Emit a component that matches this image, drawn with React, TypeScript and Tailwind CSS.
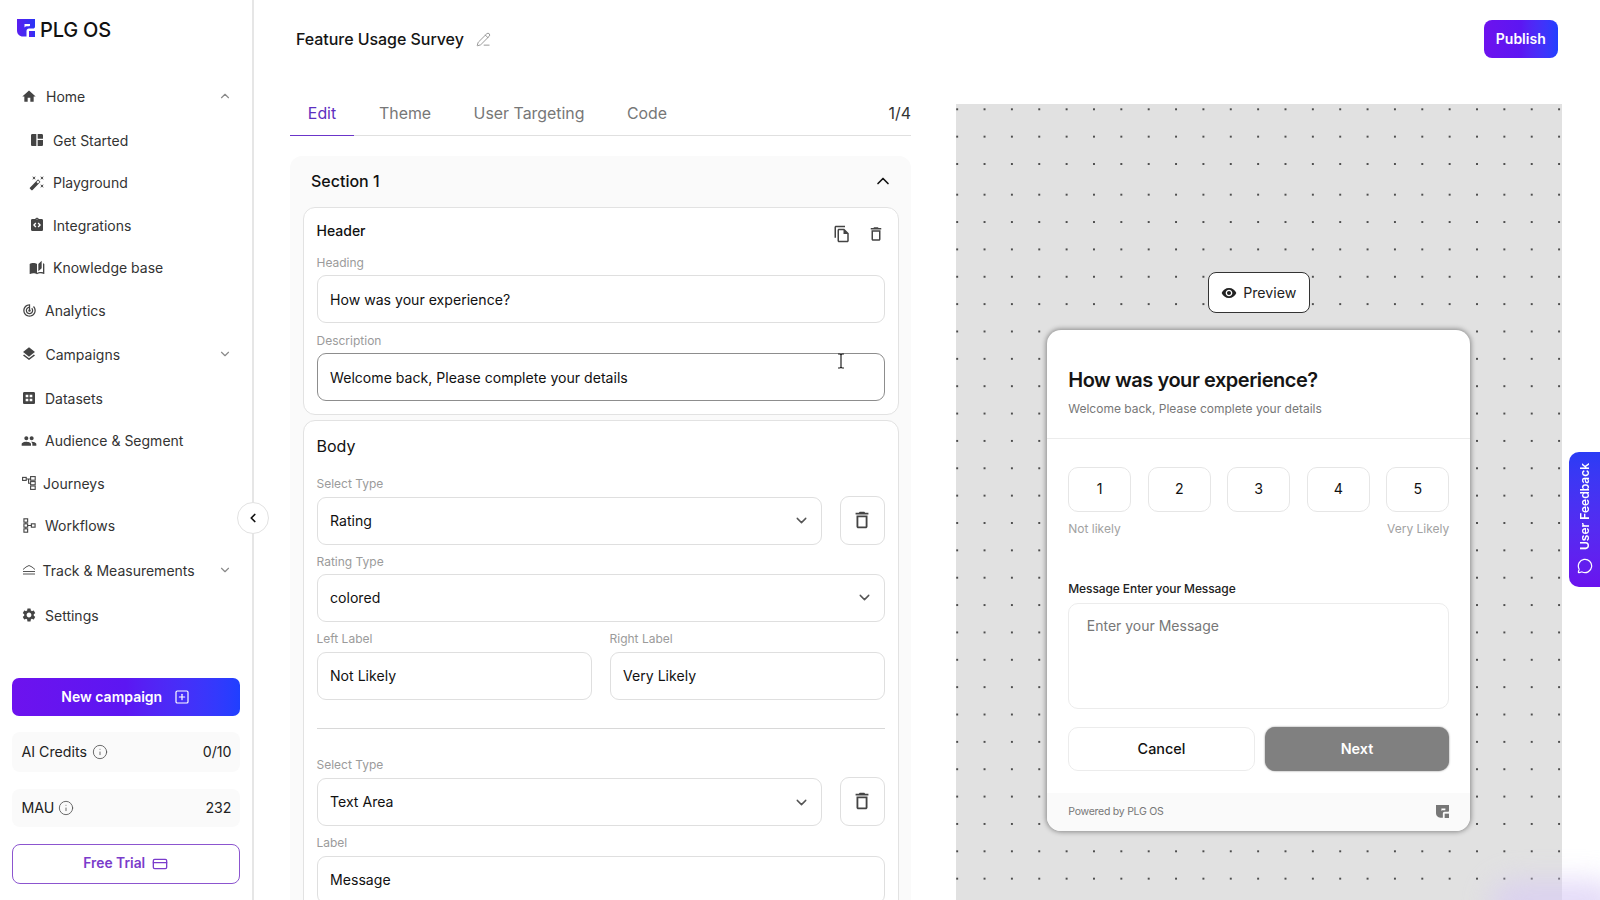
import React from "react";
import { ChevronDown, ChevronLeft, ChevronUp, CreditCard, Info, MessageCircle, PencilLine, SquarePlus } from "lucide-react";
import {
  MdAutoFixHigh, MdDataset, MdHome, MdIntegrationInstructions, MdLayers, MdOutlineDelete, MdOutlineFileCopy,
  MdPeople, MdSettings, MdSpaceDashboard, MdTrackChanges, MdVisibility, MdAutoStories,
} from "react-icons/md";

const Logo = ({ c = "url(#lg)", cls = "w-[18px] h-[18px]" }: { c?: string; cls?: string }) => (
  <svg viewBox="0 0 18 18" className={cls}>
    <defs>
      <linearGradient id="lg" x1="0" x2="1" y1="0" y2="0">
        <stop offset="0" stopColor="#5a1ff0" />
        <stop offset="1" stopColor="#2a35f5" />
      </linearGradient>
    </defs>
    <path d="M0 0H18V7.5C18 9 17 9.5 16 9.5H12C10.5 9.5 9.5 10.5 9.5 12V17.5L6 17.5C2.5 17.5 0 15 0 11.5Z" fill={c} />
    <path d="M7.5 5H13V6.5C13 7 12.6 7.3 12 7.3H9.5C8.5 7.3 7.5 8 7.5 9Z" fill="#fff" />
    <rect x="12" y="12" width="6" height="6" fill={c} />
  </svg>
);

const JourneyIcon = () => (
  <svg viewBox="0 0 14 14" className="w-[14px] h-[14px]" fill="none" stroke="#444" strokeWidth="1.1">
    <rect x="0.6" y="1.4" width="3.6" height="3" />
    <rect x="8.6" y="0.6" width="4.6" height="3.6" />
    <rect x="8.6" y="5.6" width="4.6" height="3.2" />
    <rect x="8.6" y="10" width="4.6" height="3.4" />
    <path d="M4.2 3H8.6M6.6 3V7.2H8.6" />
  </svg>
);
const WorkflowIcon = () => (
  <svg viewBox="0 0 14 16" className="w-[13px] h-[15px]" fill="none" stroke="#444" strokeWidth="1.2">
    <rect x="1" y="0.8" width="4" height="3.6" />
    <rect x="1" y="6.2" width="4" height="3.6" />
    <rect x="1" y="11.6" width="4" height="3.6" />
    <rect x="9" y="6.2" width="4" height="3.6" />
    <path d="M3 4.4V6.2M3 9.8V11.6M5 8H9" />
  </svg>
);
const TrackIcon = () => (
  <svg viewBox="0 0 14 12" className="w-[14px] h-[12px]" fill="none" stroke="#555" strokeWidth="1">
    <path d="M1 5.5L4 3L7 1.5L10 3L13 5.5M1 7.5H13M1 10H13" />
  </svg>
);

type Row = { label: string; icon: React.ReactNode; h: string; sub?: boolean; gap: string; chev?: "up" | "down" };
const ic = "text-[#444] text-[16px]";
const rows: Row[] = [
  { label: "Home", icon: <MdHome className="text-[#444] text-[17px]" />, h: "h-[44.6px]", gap: "gap-[9px]", chev: "up" },
  { label: "Get Started", icon: <MdSpaceDashboard className={ic} />, h: "h-[43.35px]", sub: true, gap: "gap-[8px]" },
  { label: "Playground", icon: <MdAutoFixHigh className={ic} />, h: "h-[42px]", sub: true, gap: "gap-[8px]" },
  { label: "Integrations", icon: <MdIntegrationInstructions className={ic} />, h: "h-[42.5px]", sub: true, gap: "gap-[8px]" },
  { label: "Knowledge base", icon: <MdAutoStories className={ic} />, h: "h-[42.25px]", sub: true, gap: "gap-[8px]" },
  { label: "Analytics", icon: <MdTrackChanges className="text-[#444] text-[15px]" />, h: "h-[43.35px]", gap: "gap-[8px]" },
  { label: "Campaigns", icon: <MdLayers className={ic} />, h: "h-[44.5px]", gap: "gap-[8.5px]", chev: "down" },
  { label: "Datasets", icon: <MdDataset className={ic} />, h: "h-[43.15px]", gap: "gap-[8px]" },
  { label: "Audience & Segment", icon: <MdPeople className={ic} />, h: "h-[42.5px]", gap: "gap-[8px]" },
  { label: "Journeys", icon: <JourneyIcon />, h: "h-[42px]", gap: "gap-[6px]" },
  { label: "Workflows", icon: <WorkflowIcon />, h: "h-[43.5px]", gap: "gap-[8px]" },
  { label: "Track & Measurements", icon: <TrackIcon />, h: "h-[45.5px]", gap: "gap-[5.5px]", chev: "down" },
  { label: "Settings", icon: <MdSettings className={ic} />, h: "h-[44px]", gap: "gap-[8px]" },
];

const Sidebar = () => (
  <aside className="relative w-[254px] h-full shrink-0 border-r-2 border-[#e6e6e6] flex flex-col bg-white">
    <div className="h-[74px] flex items-start pl-[17px] pt-[19px] gap-[5px]">
      <Logo />
      <span className="text-[20px] leading-[22px] font-medium text-[#111] tracking-[-0.2px]">PLG OS</span>
    </div>
    <nav className="flex flex-col pl-[21px] pr-[20.5px]">
      {rows.map((r) => (
        <div key={r.label} className={`flex items-center ${r.h} ${r.sub ? "pl-[8px]" : ""} ${r.gap}`}>
          <span className="w-[16px] flex justify-center shrink-0">{r.icon}</span>
          <span className="text-[14px] text-[#333] whitespace-nowrap">{r.label}</span>
          {r.chev === "up" && <ChevronUp size={14} className="ml-auto text-[#8a8a8a]" />}
          {r.chev === "down" && <ChevronDown size={14} className="ml-auto text-[#8a8a8a]" />}
        </div>
      ))}
    </nav>
    <div className="mt-auto pl-[12px] pr-[12.5px] pb-[16.5px] flex flex-col">
      <button className="h-[38px] rounded-[7px] bg-gradient-to-r from-[#6d12ee] via-[#5c16f2] to-[#1f3fff] text-white font-semibold text-[14px] flex items-center justify-center gap-[12px]">
        New campaign <SquarePlus size={16} strokeWidth={1.8} />
      </button>
      <div className="mt-[16px] h-[40px] rounded-[8px] bg-[#fafafa] flex items-center pl-[9.5px] pr-[8px] text-[14.2px] text-[#222]">
        AI Credits <Info size={16} strokeWidth={1.3} className="ml-[5px] text-[#555]" />
        <span className="ml-auto">0/10</span>
      </div>
      <div className="mt-[17px] h-[38.5px] rounded-[8px] bg-[#fafafa] flex items-center pl-[9.5px] pr-[8px] text-[14.2px] text-[#222]">
        MAU <Info size={16} strokeWidth={1.3} className="ml-[4px] text-[#555]" />
        <span className="ml-auto">232</span>
      </div>
      <button className="mt-[17px] h-[39.5px] rounded-[8px] border border-[#8c55cf] text-[#7a3ccb] font-semibold text-[13.8px] flex items-center justify-center gap-[7px]">
        Free Trial <CreditCard size={16} strokeWidth={2} />
      </button>
    </div>
    <button className="absolute right-[-17px] top-[502px] w-[32px] h-[32px] rounded-full bg-white border border-[#e2e2e2] flex items-center justify-center text-[#111]">
      <ChevronLeft size={14} strokeWidth={3} />
    </button>
  </aside>
);

const Label = ({ children, cls = "" }: { children: React.ReactNode; cls?: string }) => (
  <div className={`text-[12px] leading-[16px] text-[#9b9b9b] ${cls}`}>{children}</div>
);
const Field = ({ value, cls = "", dark }: { value: string; cls?: string; dark?: boolean }) => (
  <div className={`h-[48px] rounded-[9px] border ${dark ? "border-[#8d8d8d]" : "border-[#dfdfdf]"} bg-white flex items-center pl-[12.5px] text-[14.1px] text-[#111] ${cls}`}>
    {value}
  </div>
);
const Select = ({ value, cls = "" }: { value: string; cls?: string }) => (
  <div className={`h-[47.4px] rounded-[9px] border border-[#dfdfdf] bg-white flex items-center pl-[12.5px] pr-[11px] text-[14.1px] text-[#111] ${cls}`}>
    {value}
    <ChevronDown size={17} strokeWidth={2} className="ml-auto text-[#555]" />
  </div>
);
const TrashBtn = () => (
  <div className="w-[45px] h-[48.7px] rounded-[9px] border border-[#dfdfdf] flex items-center justify-center">
    <MdOutlineDelete className="text-[22px] text-[#444]" />
  </div>
);

const Editor = () => (
  <div className="w-[621px] shrink-0 ml-[36px] flex flex-col">
    <div className="h-[32px] flex border-b-[1.5px] border-[#e0e0e0] text-[15.9px] text-[#777] items-start relative">
      <div className="w-[64px] h-[32px] border-b-[1.5px] border-[#6b35c9] text-[#5d2fc0] flex justify-center leading-[18px] pt-[1px]">Edit</div>
      <span className="ml-[25px] leading-[18px] pt-[1px]">Theme</span>
      <span className="ml-[42.5px] leading-[18px] pt-[1px]">User Targeting</span>
      <span className="ml-[42.5px] leading-[18px] pt-[1px]">Code</span>
      <span className="ml-auto text-[#333] leading-[18px] pt-[1px]">1/4</span>
    </div>
    <div className="mt-[20px] flex-1 rounded-t-[12px] bg-[#fafafa] px-[12.5px] overflow-hidden">
      <div className="h-[50.5px] flex items-center justify-between pl-[8.5px] pr-[6px] text-[16px] font-medium text-[#111]">
        Section 1 <ChevronUp size={20} strokeWidth={2} />
      </div>
      <div className="h-[208.5px] rounded-[12px] border border-[#e2e2e2] bg-white px-[13px] flex flex-col relative">
        <div className="h-[48px] flex items-start pt-[14px] justify-between">
          <span className="text-[14px] leading-[18px] font-medium text-[#111]">Header</span>
          <span className="flex gap-[15.5px] pt-[3.5px] text-[#444]">
            <MdOutlineFileCopy className="text-[18px]" />
            <MdOutlineDelete className="text-[18px]" />
          </span>
        </div>
        <Label cls="-mt-[1px]">Heading</Label>
        <Field value="How was your experience?" cls="mt-[4.8px]" />
        <Label cls="mt-[9.3px]">Description</Label>
        <Field value="Welcome back, Please complete your details" dark cls="mt-[4.5px]" />
      </div>
      <div className="mt-[5px] rounded-[12px] border border-[#e2e2e2] bg-white px-[13px] flex flex-col pb-[8px]">
        <div className="h-[51px] pt-[14px] text-[16px] leading-[22px] text-[#111]">Body</div>
        <Label cls="mt-[4.3px]">Select Type</Label>
        <div className="mt-[3.7px] flex items-end gap-[17.5px]">
          <Select value="Rating" cls="flex-1" />
          <TrashBtn />
        </div>
        <Label cls="mt-[9px]">Rating Type</Label>
        <Select value="colored" cls="mt-[4.6px]" />
        <div className="mt-[9.3px] grid grid-cols-2 gap-[18px]">
          <div>
            <Label>Left Label</Label>
            <Field value="Not Likely" cls="mt-[5px]" />
          </div>
          <div>
            <Label>Right Label</Label>
            <Field value="Very Likely" cls="mt-[5px]" />
          </div>
        </div>
        <div className="mt-[28.1px] h-[1px] bg-[#d8d8d8]" />
        <Label cls="mt-[28.4px]">Select Type</Label>
        <div className="mt-[3.6px] flex items-end gap-[17.5px]">
          <Select value="Text Area" cls="flex-1" />
          <TrashBtn />
        </div>
        <Label cls="mt-[9.4px]">Label</Label>
        <Field value="Message" cls="mt-[4.6px]" />
      </div>
    </div>
  </div>
);

const dots = "bg-[#e1e1e1] bg-[radial-gradient(circle,#4d4d4d_1.1px,transparent_1.5px)] bg-[length:27.37px_27.37px]";

const Preview = () => (
  <div className="ml-[45px] w-[606px] shrink-0 flex flex-col overflow-hidden">
    <div className={`h-[76px] shrink-0 ${dots} bg-[position:-12.5px_-8.4px]`} />
    <div className={`flex-1 ${dots} bg-[position:-12.5px_1px] flex flex-col items-center pr-[1.5px]`}>
      <div className="mt-[92px] ml-[1px] w-[102px] h-[41px] rounded-[8px] border border-[#333] bg-white flex items-center justify-center gap-[6px] text-[14.2px] text-[#222]">
        <MdVisibility className="text-[16px] text-[#222]" /> Preview
      </div>
      <div className="mt-[16.5px] w-[423px] h-[501px] rounded-[14px] bg-white shadow-[0_0_5px_1px_rgba(0,0,0,0.4)] flex flex-col overflow-hidden">
        <div className="h-[109px] border-b border-[#ececec] pl-[21.5px] pr-[20.5px] pt-[36px] shrink-0">
          <div className="text-[20px] leading-[28px] font-semibold tracking-[-0.46px] text-[#151515]">How was your experience?</div>
          <div className="text-[12px] leading-[16px] mt-[7px] text-[#777]">Welcome back, Please complete your details</div>
        </div>
        <div className="pl-[21.5px] pr-[20.5px] flex-1 flex flex-col">
          <div className="mt-[28px] flex justify-between">
            {[1, 2, 3, 4, 5].map((n) => (
              <div key={n} className="w-[63px] h-[45px] rounded-[10px] border border-[#e6e6e6] flex items-center justify-center text-[14.2px] text-[#111]">{n}</div>
            ))}
          </div>
          <div className="mt-[9.5px] flex justify-between text-[12px] leading-[16px] text-[#a2a2a2]">
            <span>Not likely</span>
            <span>Very Likely</span>
          </div>
          <div className="mt-[43.5px] text-[12px] leading-[16px] tracking-[-0.1px] font-medium text-[#222]">Message Enter your Message</div>
          <div className="mt-[6.5px] h-[106px] rounded-[10px] border border-[#ececec] pl-[17.5px] pt-[12px] text-[14px] leading-[20px] text-[#777]">Enter your Message</div>
          <div className="mt-[17.5px] flex gap-[10px]">
            <div className="flex-1 h-[44.5px] rounded-[10px] border border-[#ececec] flex items-center justify-center text-[14.4px] font-medium text-[#111]">Cancel</div>
            <div className="flex-1 h-[44.5px] rounded-[10px] bg-[#808080] shadow-[0_0_2px_rgba(0,0,0,0.5)] flex items-center justify-center text-[14.4px] font-semibold text-white">Next</div>
          </div>
        </div>
        <div className="h-[37.5px] bg-[#fafafa] pl-[21.5px] pr-[20.5px] flex items-center justify-between text-[10.5px] tracking-[-0.25px] text-[#777] shrink-0">
          Powered by PLG OS
          <Logo c="#777" cls="w-[13px] h-[13px]" />
        </div>
      </div>
    </div>
  </div>
);

export default function App() {
  return (
    <div className="relative w-[1600px] h-[900px] overflow-hidden bg-white flex font-['Inter','Liberation_Sans',sans-serif]">
      <Sidebar />
      <main className="flex-1 flex flex-col h-full min-w-0">
        <header className="h-[104px] shrink-0 flex items-start pl-[42px] pr-[42.5px] pt-[20px]">
          <div className="h-[38px] flex items-center gap-[12px] text-[16px] tracking-[-0.05px] font-medium text-[#151515]">
            Feature Usage Survey <PencilLine size={15} strokeWidth={1.2} className="text-[#777]" />
          </div>
          <button className="ml-auto w-[73.5px] h-[38px] rounded-[8px] pb-[1px] bg-gradient-to-r from-[#6d12ee] via-[#5c16f2] to-[#1f3fff] text-white font-semibold text-[14px]">Publish</button>
        </header>
        <div className="flex-1 flex min-h-0">
          <Editor />
          <Preview />
        </div>
      </main>
      <div className="absolute right-[-20px] bottom-[-30px] w-[130px] h-[50px] rounded-full bg-[#d9ccf5] blur-[14px] opacity-70" />
      <div className="absolute right-0 top-[452px] w-[31.5px] h-[135px] rounded-l-[10px] bg-gradient-to-b from-[#2a3cf5] to-[#6a12ee] flex flex-col items-center justify-end pl-[1.5px] pb-[13px] gap-[8px] text-white">
        <span className="[writing-mode:vertical-rl] rotate-180 text-[12px] font-semibold whitespace-nowrap">User Feedback</span>
        <MessageCircle size={16} strokeWidth={1.8} />
      </div>
      <svg viewBox="0 0 10 16" className="absolute left-[836px] top-[353px] w-[10px] h-[16px]" fill="none" stroke="#222" strokeWidth="1.2">
        <path d="M2 1H4L5 2L6 1H8M5 2V14M2 15H4L5 14L6 15H8" />
      </svg>
    </div>
  );
}
